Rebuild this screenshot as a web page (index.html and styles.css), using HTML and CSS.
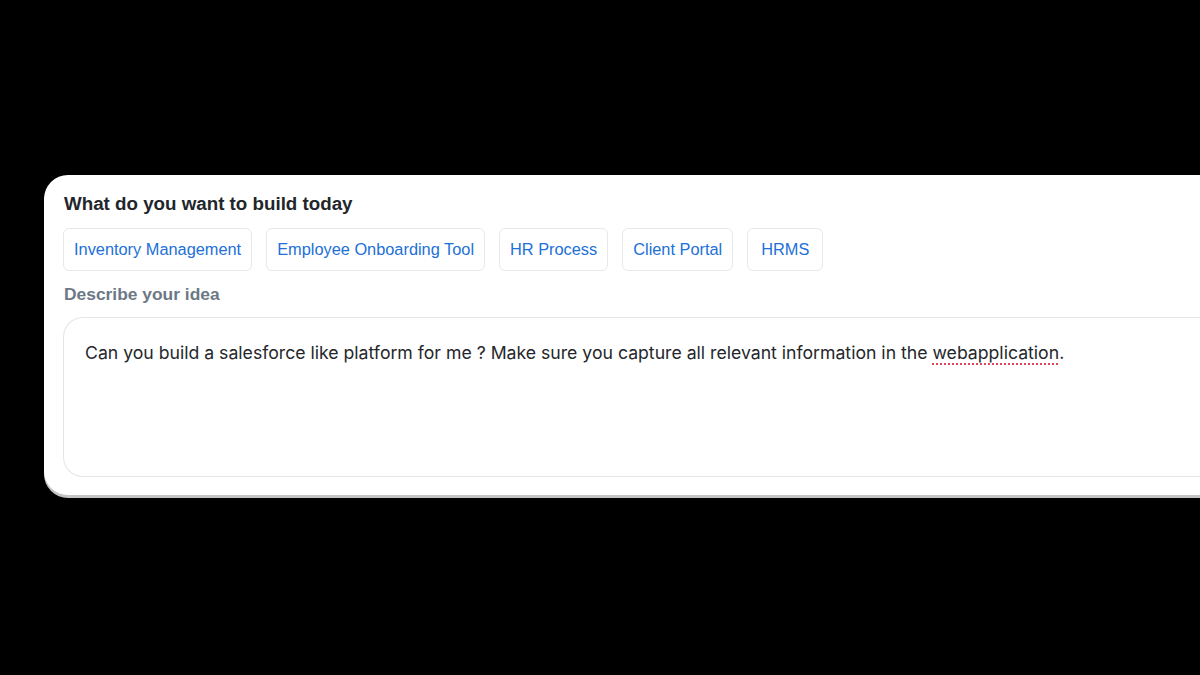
FILE: index.html
```html
<!DOCTYPE html>
<html>
<head>
<meta charset="utf-8">
<link rel="stylesheet" href="styles.css">
</head>
<body>
<div class="stage">
  <div class="card">
    <h2 class="title">What do you want to build today</h2>
    <div class="chips">
      <button class="chip">Inventory Management</button>
      <button class="chip">Employee Onboarding Tool</button>
      <button class="chip">HR Process</button>
      <button class="chip">Client Portal</button>
      <button class="chip">HRMS</button>
    </div>
    <div class="label">Describe your idea</div>
    <div class="idea">Can you build a salesforce like platform for me ? Make sure you capture all relevant information in the <span class="spell">webapplication</span>.</div>
  </div>
</div>
</body>
</html>
```

FILE: styles.css
```css
html, body {
  margin: 0;
  padding: 0;
  background: #000;
  overflow: hidden;
}
.stage {
  width: 1200px;
  height: 675px;
  padding-top: 175px;
  padding-left: 44px;
  box-sizing: border-box;
  overflow: hidden;
}
.card {
  width: 1240px;
  background: #fff;
  border-radius: 24px 0 0 24px;
  padding: 18px 0 18px 19px;
  box-sizing: border-box;
  box-shadow: 0 3px 0 #c4c4c4;
  font-family: "Liberation Sans", Arial, sans-serif;
}
.title {
  margin: 0 0 13px 1px;
  font-size: 18.75px;
  line-height: 22px;
  font-weight: bold;
  color: #22262b;
}
.chips {
  display: flex;
  gap: 14px;
}
.chip {
  font-family: "Liberation Sans", Arial, sans-serif;
  font-size: 16.35px;
  line-height: 19px;
  color: #2170d8;
  background: #fff;
  border: 1px solid #e6e8eb;
  border-radius: 6px;
  padding: 11px 10px;
  margin: 0;
  min-width: 76px;
  text-align: center;
}
.label {
  margin-top: 13px;
  margin-left: 1px;
  font-size: 17.4px;
  line-height: 20px;
  font-weight: bold;
  color: #6d7886;
}
.idea {
  margin-top: 13px;
  height: 160px;
  box-sizing: border-box;
  border: 1px solid #e4e5e7;
  border-right: none;
  border-radius: 20px 0 0 20px;
  padding: 25px 21px;
  font-family: Inter, "Noto Sans", sans-serif;
  font-size: 17.65px;
  line-height: 20px;
  color: #24272b;
}
.spell {
  text-decoration: underline dotted #e0455a;
  text-decoration-thickness: 1.5px;
  text-underline-offset: 4px;
}
```
